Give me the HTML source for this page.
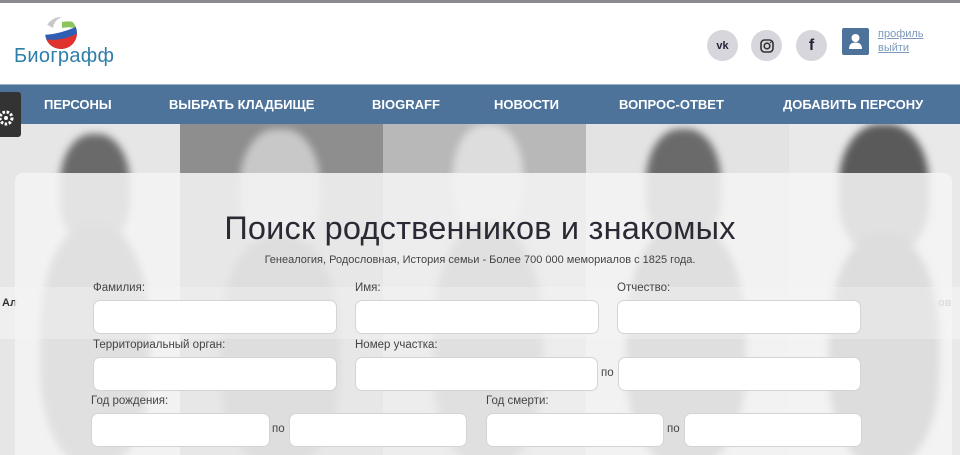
<!DOCTYPE html>
<html><head><meta charset="utf-8"><style>
*{margin:0;padding:0;box-sizing:border-box}
html,body{width:960px;height:455px;overflow:hidden}
body{position:relative;font-family:"Liberation Sans","DejaVu Sans",sans-serif;background:#ddd}
.topb{position:absolute;left:0;top:0;width:960px;height:3px;background:#8a8a90}
.hdr{position:absolute;left:0;top:3px;width:960px;height:81px;background:#fff}
.nav{position:absolute;left:0;top:84px;width:960px;height:40px;background:#4d739b;border-top:1px solid #9db0c6}
.nav span{position:absolute;top:12px;color:#fff;font-weight:bold;font-size:13px}
.gear{position:absolute;left:0;top:92px;width:21px;height:45px;background:#333;border-radius:0 3px 3px 0;z-index:5}
.photos{position:absolute;left:0;top:124px;width:960px;height:331px;overflow:hidden}
.ph{position:absolute;top:0;height:331px;overflow:hidden}
.head{position:absolute;border-radius:45% 45% 40% 40%;filter:blur(4px)}
.panel{position:absolute;left:15px;top:173px;width:937px;height:282px;background:rgba(244,244,244,0.88);border-radius:8px 8px 0 0}
.band{position:absolute;left:0;top:287px;width:960px;height:52px;background:rgba(255,255,255,0.35)}
h1{position:absolute;left:0;width:960px;top:210px;text-align:center;font-weight:normal;font-size:32.5px;color:#2a2a35;letter-spacing:0.2px}
.sub{position:absolute;left:0;width:960px;top:254px;text-align:center;font-size:11px;color:#444}
.lb{position:absolute;font-size:11.5px;color:#444}
.in{position:absolute;height:34px;background:#fff;border:1px solid #d4d4d4;border-radius:7px}
.po{position:absolute;font-size:11.5px;color:#444}
.soc{position:absolute;top:27px;width:31px;height:31px;border-radius:50%;background:#d6d6dc;display:flex;align-items:center;justify-content:center}
.lk{position:absolute;left:878px;font-size:11px;color:#7c98ba;text-decoration:underline}
</style></head><body>
<div class="topb"></div>
<div class="hdr">
  <svg style="position:absolute;left:44px;top:13px" width="34" height="34" viewBox="0 0 34 34">
    <defs><clipPath id="c"><circle cx="17" cy="17" r="16"/></clipPath></defs>
    <g clip-path="url(#c)">
      <rect width="34" height="34" fill="#fff"/>
      <path d="M2 8 Q8 0 18 1 Q10 4 9 12Z" fill="#c8c8c8"/>
      <path d="M18 6 Q28 4 34 8 L34 13 Q26 10 18 12Z" fill="#8cc35a"/>
      <path d="M0 19 Q16 18 34 10 L34 34 L0 34Z" fill="#2f5fb5"/>
      <path d="M0 23 Q18 26 34 17 L34 34 L0 34Z" fill="#e0322e"/>
    </g>
  </svg>
  <div style="position:absolute;left:14px;top:42px;font-size:20px;color:#2e7eaa;letter-spacing:0.3px">Биографф</div>
  <div class="soc" style="left:707px"><span style="font-weight:bold;font-size:11px;color:#222238">vk</span></div>
  <div class="soc" style="left:751px"><svg width="14" height="14" viewBox="0 0 14 14"><rect x="1" y="1" width="12" height="12" rx="3.5" fill="none" stroke="#333" stroke-width="1.6"/><circle cx="7" cy="7" r="2.8" fill="none" stroke="#333" stroke-width="1.6"/><circle cx="10.6" cy="3.4" r="0.8" fill="#333"/></svg></div>
  <div class="soc" style="left:796px"><span style="font-weight:bold;font-size:16px;color:#222238">f</span></div>
  <div style="position:absolute;left:842px;top:25px;width:27px;height:27px;background:#4d739b;border-radius:2px">
    <svg width="27" height="27" viewBox="0 0 27 27"><circle cx="13.5" cy="10" r="4" fill="#fff"/><path d="M7 21 Q7 14.5 13.5 14.5 Q20 14.5 20 21Z" fill="#fff"/></svg>
  </div>
  <div class="lk" style="top:25px">профиль</div>
  <div class="lk" style="top:39px">выйти</div>
</div>
<div class="nav">
  <span style="left:44px">ПЕРСОНЫ</span>
  <span style="left:169px">ВЫБРАТЬ КЛАДБИЩЕ</span>
  <span style="left:372px">BIOGRAFF</span>
  <span style="left:494px">НОВОСТИ</span>
  <span style="left:619px">ВОПРОС-ОТВЕТ</span>
  <span style="left:783px">ДОБАВИТЬ ПЕРСОНУ</span>
</div>
<div class="gear"><svg width="21" height="45" viewBox="0 0 21 45"><circle cx="6" cy="26" r="6" fill="none" stroke="#fff" stroke-width="3" stroke-dasharray="2.5 1.6"/><circle cx="6" cy="26" r="2" fill="#fff"/></svg></div>
<div class="photos">
  <div class="ph" style="left:0;width:180px;background:#e6e6e6"><div class="head" style="left:60px;top:10px;width:70px;height:110px;background:#6a6a6a"></div><div class="head" style="left:40px;top:100px;width:110px;height:240px;background:#555"></div></div>
  <div class="ph" style="left:180px;width:203px;background:#8e8e8e"><div class="head" style="left:60px;top:5px;width:80px;height:120px;background:#c8c8c8"></div><div class="head" style="left:40px;top:110px;width:120px;height:230px;background:#444"></div></div>
  <div class="ph" style="left:383px;width:203px;background:#b8b8b8"><div class="head" style="left:70px;top:0;width:70px;height:110px;background:#ddd"></div><div class="head" style="left:50px;top:100px;width:110px;height:240px;background:#555"></div></div>
  <div class="ph" style="left:586px;width:203px;background:#e3e3e3"><div class="head" style="left:60px;top:5px;width:75px;height:115px;background:#6a6a6a"></div><div class="head" style="left:40px;top:100px;width:120px;height:240px;background:#4a4a4a"></div></div>
  <div class="ph" style="left:789px;width:171px;background:#e9e9e9"><div class="head" style="left:50px;top:0;width:90px;height:130px;background:#5a5a5a"></div><div class="head" style="left:40px;top:110px;width:110px;height:230px;background:#3a3a3a"></div></div>
</div>
<div class="band"></div>
<div style="position:absolute;left:2px;top:297px;font-size:11px;color:#333;font-weight:bold">Ал</div>
<div style="position:absolute;left:938px;top:297px;font-size:11px;color:#333;font-weight:bold">ов</div>
<div class="panel"></div>
<h1>Поиск родственников и знакомых</h1>
<div class="sub">Генеалогия, Родословная, История семьи - Более 700 000 мемориалов с 1825 года.</div>
<div class="lb" style="left:93px;top:282px">Фамилия:</div>
<div class="lb" style="left:355px;top:282px">Имя:</div>
<div class="lb" style="left:617px;top:282px">Отчество:</div>
<div class="in" style="left:93px;top:300px;width:244px"></div>
<div class="in" style="left:355px;top:300px;width:244px"></div>
<div class="in" style="left:617px;top:300px;width:244px"></div>
<div class="lb" style="left:93px;top:339px">Территориальный орган:</div>
<div class="lb" style="left:355px;top:339px">Номер участка:</div>
<div class="in" style="left:93px;top:357px;width:244px"></div>
<div class="in" style="left:355px;top:357px;width:243px"></div>
<div class="po" style="left:601px;top:367px">по</div>
<div class="in" style="left:618px;top:357px;width:243px"></div>
<div class="lb" style="left:91px;top:395px">Год рождения:</div>
<div class="lb" style="left:486px;top:395px">Год смерти:</div>
<div class="in" style="left:91px;top:413px;width:179px"></div>
<div class="po" style="left:272px;top:423px">по</div>
<div class="in" style="left:289px;top:413px;width:178px"></div>
<div class="in" style="left:486px;top:413px;width:178px"></div>
<div class="po" style="left:667px;top:423px">по</div>
<div class="in" style="left:684px;top:413px;width:178px"></div>
</body></html>
